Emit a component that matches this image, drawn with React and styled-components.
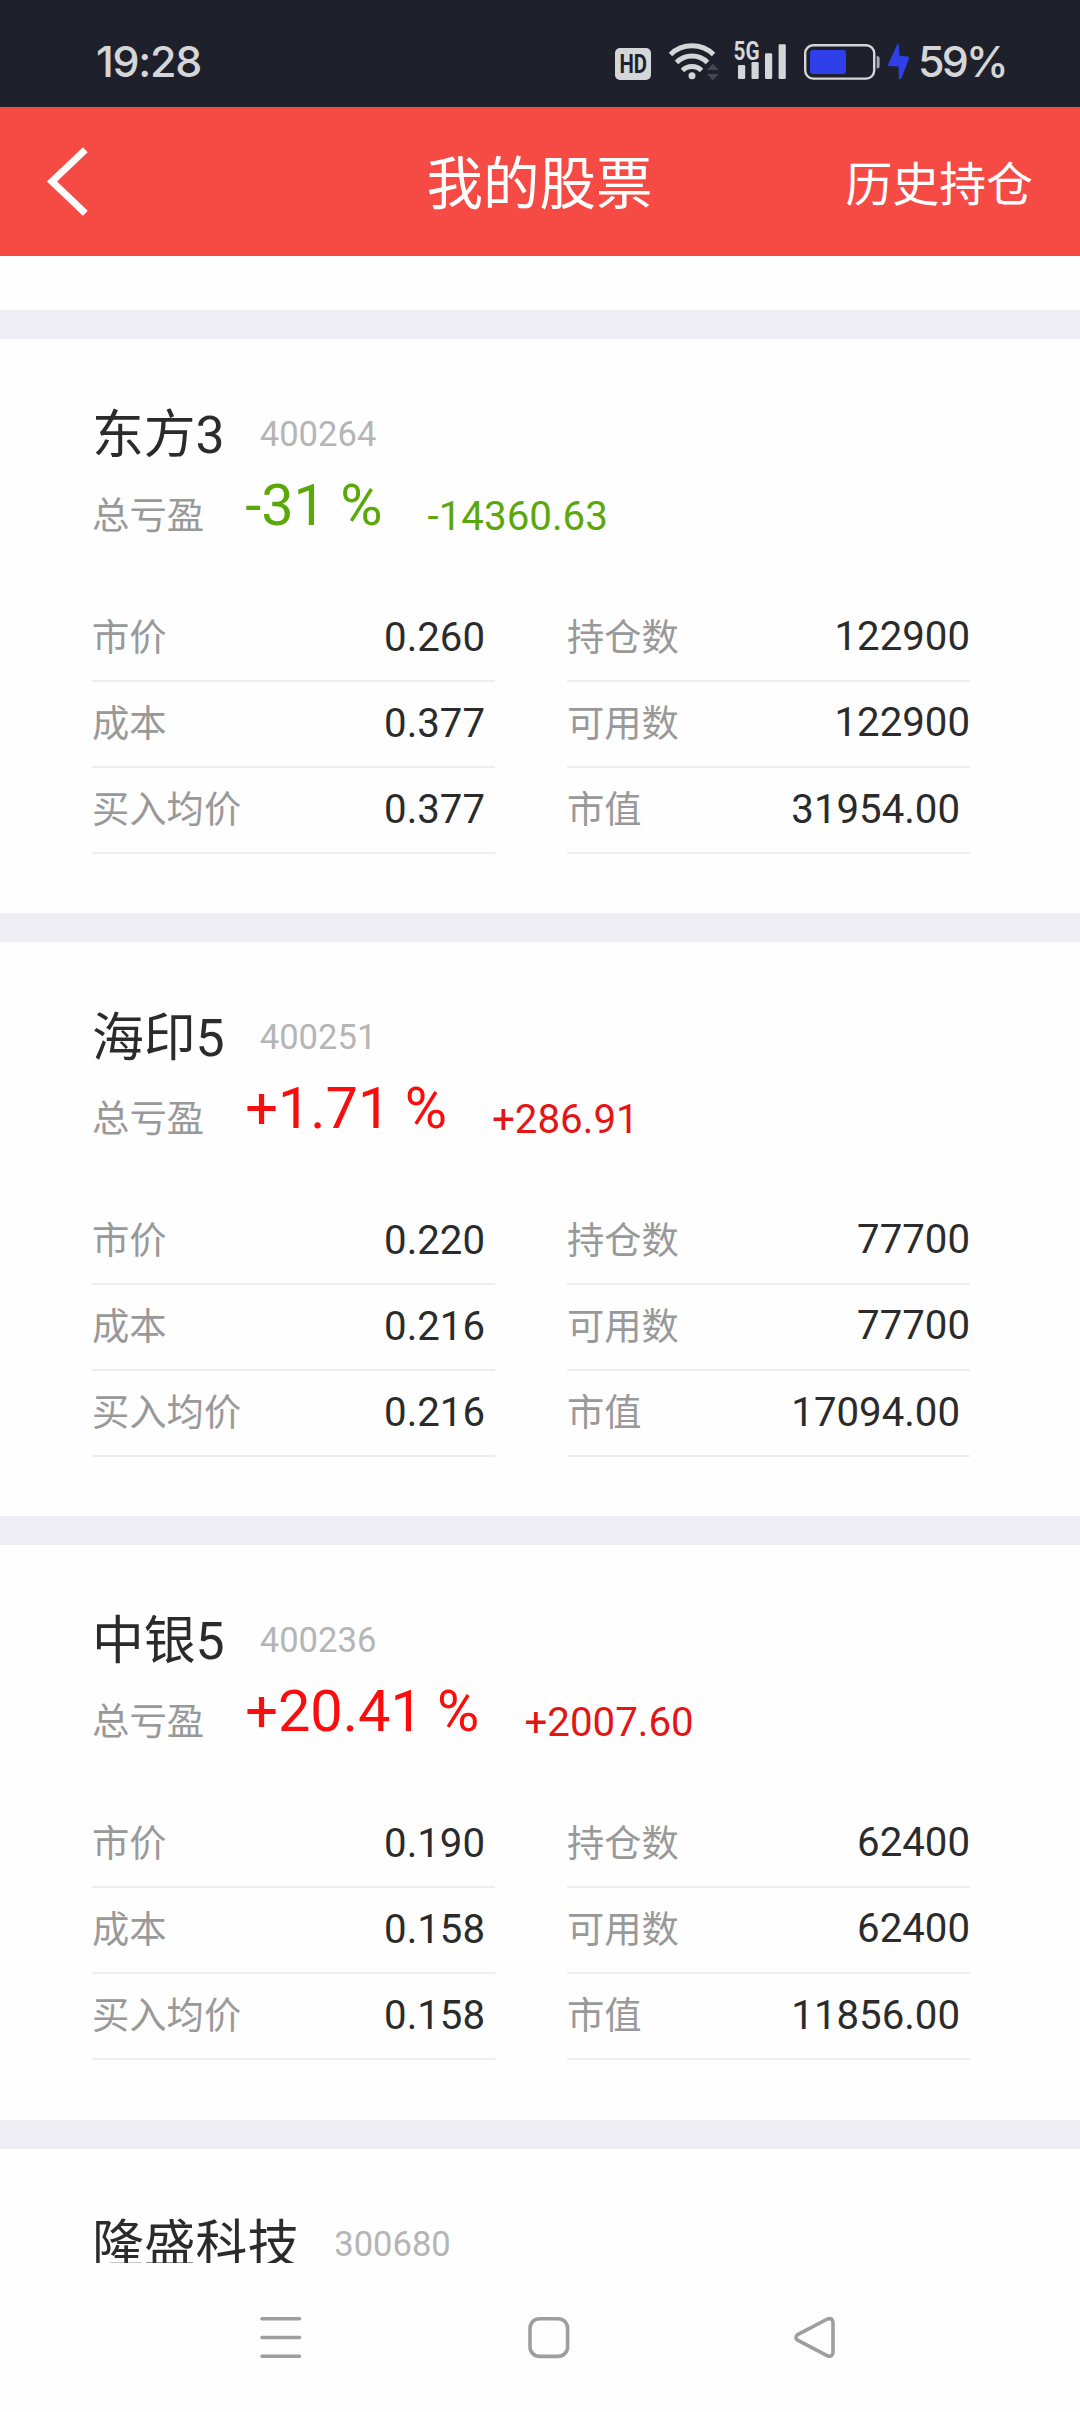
import React from 'react'
import styled, { createGlobalStyle } from 'styled-components'

const GlobalStyle = createGlobalStyle`
  body {
    margin: 0;
    background: #fefefe;
    font-family: Roboto, 'Noto Sans CJK SC', sans-serif;
    color: #2b2b2b;
  }
`

const Screen = styled.div`
  display: flex;
  flex-direction: column;
  width: 1080px;
  height: 2412px;
  overflow: hidden;
`

const StatusBar = styled.div`
  display: flex;
  align-items: center;
  justify-content: space-between;
  flex: none;
  box-sizing: border-box;
  height: 107px;
  padding: 17px 74px 0 96px;
  background: #1e212c;
  color: #d5d6d8;
`

const StatusText = styled.span`
  padding-bottom: 2px;
  font-family: Inter, sans-serif;
  font-size: 43px;
  font-weight: 500;
  line-height: 50px;
  letter-spacing: ${props => props.spacing};
`

const StatusIcons = styled.div`
  display: flex;
  align-items: center;

  svg {
    display: block;
    overflow: visible;
  }
`

const Icon = styled.div`
  margin-right: ${props => props.gap}px;
`

const Header = styled.div`
  display: grid;
  grid-template-columns: 1fr auto 1fr;
  align-items: center;
  flex: none;
  box-sizing: border-box;
  height: 149px;
  padding: 0 47px 0 46px;
  background: #f64a45;
  color: #fff;
`

const BackButton = styled.button`
  justify-self: start;
  padding: 0;
  border: none;
  background: none;

  svg {
    display: block;
  }
`

const Title = styled.div`
  padding-top: 7px;
  font-size: 56.5px;
  line-height: 70px;
`

const HeaderLink = styled.div`
  justify-self: end;
  padding-top: 7px;
  font-size: 46.9px;
  line-height: 60px;
`

const Content = styled.div`
  flex: 1;
  min-height: 0;
  padding-top: 54px;
  overflow: hidden;
`

const Card = styled.div`
  box-sizing: border-box;
  height: 603.2px;
  padding: 65px 110px 0 92px;
  border-top: 29px solid #efeef4;
`

const NameRow = styled.div`
  display: flex;
  align-items: flex-start;
`

const Name = styled.div`
  padding-top: 2px;
  font-size: 51.8px;
  line-height: 60px;
`

const Code = styled.div`
  margin: 10px 0 0 35px;
  font-size: 34.6px;
  line-height: 40px;
  color: #b5b5b5;
`

const ProfitRow = styled.div`
  display: flex;
  align-items: flex-start;
  margin-top: 6px;
  color: ${props => props.down ? '#5aa80a' : '#e31515'};
`

const ProfitLabel = styled.div`
  margin-top: 22px;
  font-size: 37.4px;
  line-height: 44px;
  color: #999;
`

const Percent = styled.div`
  margin-left: 41px;
  font-size: 57.7px;
  line-height: 66px;
  color: ${props => props.down ? '#5aa80a' : '#f90d0d'};
`

const Amount = styled.div`
  margin: 22px 0 0 45px;
  font-size: 40.3px;
  line-height: 46px;
`

const Details = styled.div`
  display: grid;
  grid-template-columns: 1fr 1fr;
  column-gap: 72px;
  margin-top: 55.5px;
`

const Cell = styled.div`
  display: flex;
  align-items: center;
  justify-content: space-between;
  box-sizing: border-box;
  height: 86.2px;
  border-bottom: 2px solid #eeeeee;
`

const CellLabel = styled.span`
  font-size: 37.3px;
  line-height: 44px;
  color: #999;
`

const CellValue = styled.span`
  padding: ${props => props.whole ? '0 0 2px' : '0 10px 0 0'};
  font-size: 40.2px;
  line-height: 46px;
`

const NavBar = styled.div`
  display: flex;
  flex: none;
  box-sizing: border-box;
  height: 149px;
  padding: 53px 0 0 259px;
  background: #fdfdfd;

  svg {
    margin-right: 224.5px;
    fill: none;
    stroke: #9e9e9e;
    stroke-width: 3.6px;
  }
`

function HdIcon() {
  return (
    <svg width="36" height="60" viewBox="615 32 36 60">
      <rect x="615" y="48" width="36" height="32" rx="5" fill="#d5d6d8" />
      <text
        x="619.5"
        y="73"
        fontFamily="Roboto"
        fontWeight="700"
        fontSize="26"
        textLength="27.5"
        lengthAdjust="spacingAndGlyphs"
        fill="#1e212c"
      >
        HD
      </text>
    </svg>
  )
}

function WifiIcon() {
  return (
    <svg width="52" height="60" viewBox="668 32 52 60">
      <g fill="none" stroke="#d5d6d8" strokeWidth="5">
        <path d="M670.5,54.5 A31,31 0 0 1 713.5,54.5" />
        <path d="M676.5,62.5 A22,22 0 0 1 707.5,62.5" />
        <path d="M682.5,70.5 A13.5,13.5 0 0 1 701.5,70.5" />
      </g>
      <circle cx="692" cy="75.8" r="3.5" fill="#d5d6d8" />
      <path d="M712.7,63.5 L718.5,70 H707 Z M707,74 H718.5 L712.7,80.5 Z" fill="#444751" />
    </svg>
  )
}

function SignalIcon() {
  return (
    <svg width="54" height="60" viewBox="733 32 54 60">
      <text
        x="733.5"
        y="60"
        fontFamily="Roboto"
        fontWeight="700"
        fontSize="25"
        textLength="26"
        lengthAdjust="spacingAndGlyphs"
        fill="#d5d6d8"
      >
        5G
      </text>
      <g fill="#d5d6d8">
        <rect x="738" y="65" width="7.2" height="14" rx="1.2" />
        <rect x="751.5" y="62" width="7.2" height="17" rx="1.2" />
        <rect x="765" y="53.3" width="7.2" height="25.7" rx="1.2" />
        <rect x="778.6" y="44.3" width="7.2" height="34.7" rx="1.2" />
      </g>
    </svg>
  )
}

function BatteryIcon() {
  return (
    <svg width="106" height="60" viewBox="804 32 106 60">
      <rect x="805.2" y="45.2" width="69" height="33.4" rx="8" fill="none" stroke="#d5d6d8" strokeWidth="2.4" />
      <rect x="810" y="50" width="36" height="24" rx="3" fill="#2f40ea" />
      <path d="M876.7,56 Q879.6,56 879.6,58.5 V66 Q879.6,68.5 876.7,68.5 Z" fill="#a9abb0" />
      <path d="M897.5,44 L888,64.5 Q887.5,66 889,66 L898.5,66.5 L899,79.3 L901,79 L909,59 Q909.3,56.5 908,56.5 L899.5,56 L898.8,44.5 Z" fill="#2f40ea" />
    </svg>
  )
}

function BackIcon() {
  return (
    <svg width="44" height="72" viewBox="46 145.5 44 72" fill="none" stroke="#fff" strokeWidth="7">
      <path d="M85.3,149.3 L52,181 L85.3,212.7" />
    </svg>
  )
}

function MenuIcon() {
  return (
    <svg width="43" height="43" viewBox="0 0 43 43" strokeLinecap="round">
      <path d="M3,2.8 H40.5 M3,21.5 H40.5 M3,40.2 H40.5" />
    </svg>
  )
}

function HomeIcon() {
  return (
    <svg width="43" height="43" viewBox="0 0 43 43">
      <rect x="3" y="2.8" width="37.6" height="37.6" rx="9.5" />
    </svg>
  )
}

function ReturnIcon() {
  return (
    <svg width="43" height="43" viewBox="0 0 43 43" strokeLinejoin="round">
      <path d="M3.6,18.6 L33.5,3 Q38.7,1.5 39,6.5 V36.5 Q38.7,41.5 33.5,39.8 L3.6,24.2 Q0.3,21.4 3.6,18.6 Z" />
    </svg>
  )
}

const stocks = [
  {
    name: '东方3',
    code: '400264',
    percent: '-31 %',
    amount: '-14360.63',
    down: true,
    price: '0.260',
    cost: '0.377',
    average: '0.377',
    held: '122900',
    available: '122900',
    value: '31954.00',
  },
  {
    name: '海印5',
    code: '400251',
    percent: '+1.71 %',
    amount: '+286.91',
    price: '0.220',
    cost: '0.216',
    average: '0.216',
    held: '77700',
    available: '77700',
    value: '17094.00',
  },
  {
    name: '中银5',
    code: '400236',
    percent: '+20.41 %',
    amount: '+2007.60',
    price: '0.190',
    cost: '0.158',
    average: '0.158',
    held: '62400',
    available: '62400',
    value: '11856.00',
  },
  { name: '隆盛科技', code: '300680' },
]

function Field({ label, value, whole }) {
  return (
    <Cell>
      <CellLabel>{label}</CellLabel>
      <CellValue whole={whole}>{value}</CellValue>
    </Cell>
  )
}

function Stock({ stock }) {
  return (
    <Card>
      <NameRow>
        <Name>{stock.name}</Name>
        <Code>{stock.code}</Code>
      </NameRow>
      {stock.percent && (
        <>
          <ProfitRow down={stock.down}>
            <ProfitLabel>总亏盈</ProfitLabel>
            <Percent down={stock.down}>{stock.percent}</Percent>
            <Amount>{stock.amount}</Amount>
          </ProfitRow>
          <Details>
            <Field label="市价" value={stock.price} />
            <Field label="持仓数" value={stock.held} whole />
            <Field label="成本" value={stock.cost} />
            <Field label="可用数" value={stock.available} whole />
            <Field label="买入均价" value={stock.average} />
            <Field label="市值" value={stock.value} />
          </Details>
        </>
      )}
    </Card>
  )
}

export default function App() {
  return (
    <Screen>
      <GlobalStyle />
      <StatusBar>
        <StatusText spacing="-1.3px">19:28</StatusText>
        <StatusIcons>
          <Icon gap={17}><HdIcon /></Icon>
          <Icon gap={13}><WifiIcon /></Icon>
          <Icon gap={17}><SignalIcon /></Icon>
          <Icon gap={8}><BatteryIcon /></Icon>
          <StatusText spacing="-2.8px">59%</StatusText>
        </StatusIcons>
      </StatusBar>
      <Header>
        <BackButton><BackIcon /></BackButton>
        <Title>我的股票</Title>
        <HeaderLink>历史持仓</HeaderLink>
      </Header>
      <Content>
        {stocks.map(stock => <Stock key={stock.code} stock={stock} />)}
      </Content>
      <NavBar>
        <MenuIcon />
        <HomeIcon />
        <ReturnIcon />
      </NavBar>
    </Screen>
  )
}
